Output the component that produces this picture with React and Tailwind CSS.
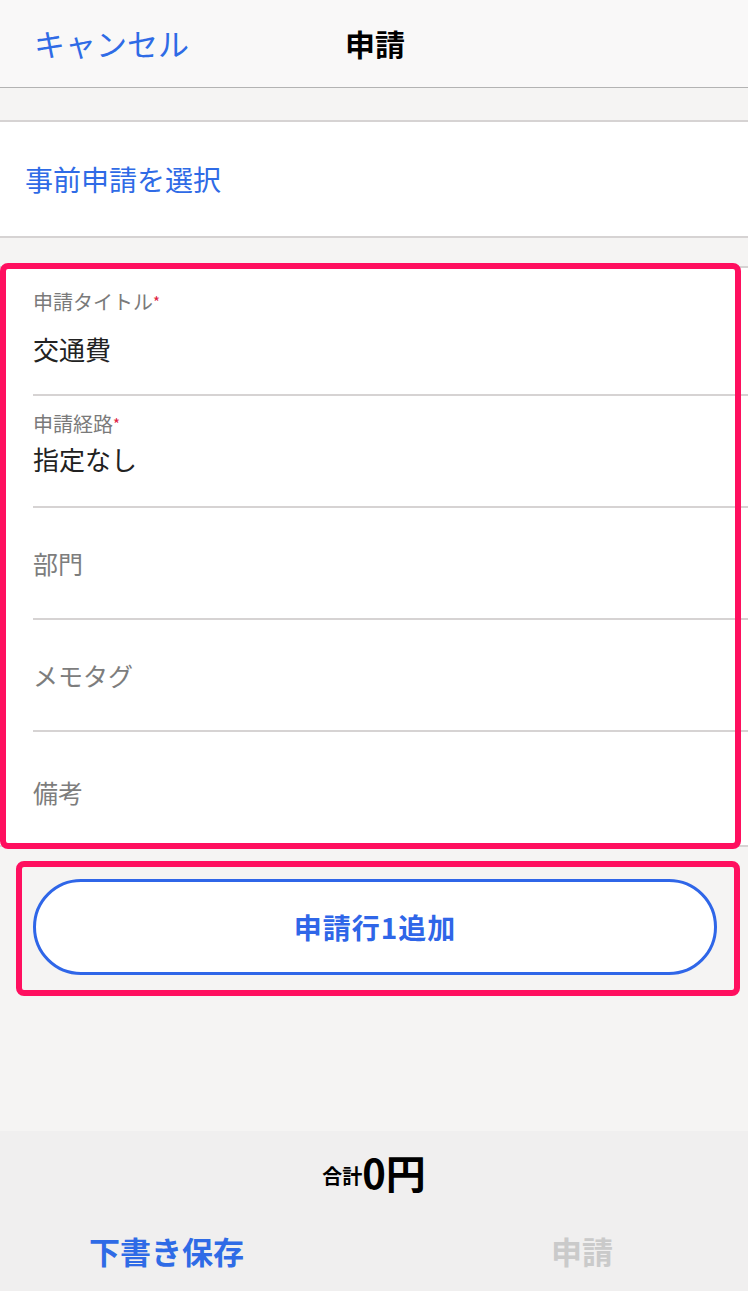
const font = { fontFamily: '"Noto Sans CJK JP", "Noto Sans", sans-serif' };

const Field = ({ placeholder }) => (
  <div className="pl-[33px]">
    <div className="h-[112px] flex items-center border-b-2 border-[#d6d3d3]">
      <div className="text-[25px] leading-[34px] text-[#7d7d7d]">{placeholder}</div>
    </div>
  </div>
);

export default function App() {
  return (
    <div className="w-[748px] h-[1291px] bg-[#f5f4f3] flex flex-col" style={font}>
      {/* header */}
      <div className="h-[88px] bg-[#f9f8f8] border-b border-[#b3b3b3] relative flex items-center shrink-0">
        <span className="ml-[34px] text-[31px] text-[#2f6be6]">キャンセル</span>
        <span className="absolute left-[345px] text-[30px] font-bold text-black">申請</span>
      </div>

      <div className="h-[32px] shrink-0" />

      {/* pre-application select */}
      <div className="h-[118px] bg-white border-y-2 border-[#d6d3d3] flex items-center shrink-0">
        <span className="ml-[25px] text-[28px] text-[#2f6be6]">事前申請を選択</span>
      </div>

      <div className="h-[28px] shrink-0" />

      {/* form */}
      <div className="relative bg-white border-y-2 border-[#d6d3d3] shrink-0">
        <div className="h-[128px] pl-[33px] pt-[22px]">
          <div className="h-full border-b-2 border-[#d6d3d3]">
            <div className="text-[20px] leading-[24px] text-[#7a7a7a]">
              申請タイトル<span className="text-[#e0203e] text-[15px] align-top">*</span>
            </div>
            <div className="mt-[17px] text-[26px] leading-[36px] text-[#222]">交通費</div>
          </div>
        </div>
        <div className="h-[112px] pl-[33px] pt-[16px]">
          <div className="h-full border-b-2 border-[#d6d3d3]">
            <div className="text-[20px] leading-[24px] text-[#7a7a7a]">
              申請経路<span className="text-[#e0203e] text-[15px] align-top">*</span>
            </div>
            <div className="mt-[8px] text-[26px] leading-[30px] text-[#222]">指定なし</div>
          </div>
        </div>
        <Field placeholder="部門" />
        <Field placeholder="メモタグ" />
        <div className="pl-[33px] h-[113px] flex items-center pt-[6px]">
          <span className="text-[25px] leading-[34px] text-[#7d7d7d]">備考</span>
        </div>
        <div className="absolute -top-[5px] left-0 right-[7px] -bottom-[4px] border-[6px] border-[#ff0f5f] rounded-[8px] pointer-events-none" />
      </div>

      {/* add line button */}
      <div className="mt-[14px] ml-[16px] mr-[8px] border-[6px] border-[#ff0f5f] rounded-[8px] pl-[11px] pr-[17px] pt-[12px] pb-[15px] shrink-0">
        <button className="w-full h-[96px] rounded-full border-[3px] border-[#2f66e8] bg-white text-[28px] font-bold text-[#2f66e8] tracking-[1px]">
          申請行1追加
        </button>
      </div>

      <div className="flex-1" />

      {/* bottom bar */}
      <div className="h-[160px] bg-[#f0efef] flex flex-col shrink-0">
        <div className="h-[66px] flex items-end justify-center">
          <span className="text-[20px] font-bold text-black mb-[6px]">合計</span>
          <span className="text-[40px] leading-[50px] font-bold text-black">0円</span>
        </div>
        <div className="flex-1 flex items-center pt-[14px]">
          <span className="ml-[89px] text-[31px] font-bold text-[#2f6be6]">下書き保存</span>
          <span className="ml-auto mr-[135px] text-[31px] font-bold text-[#cacaca]">申請</span>
        </div>
      </div>
    </div>
  );
}
